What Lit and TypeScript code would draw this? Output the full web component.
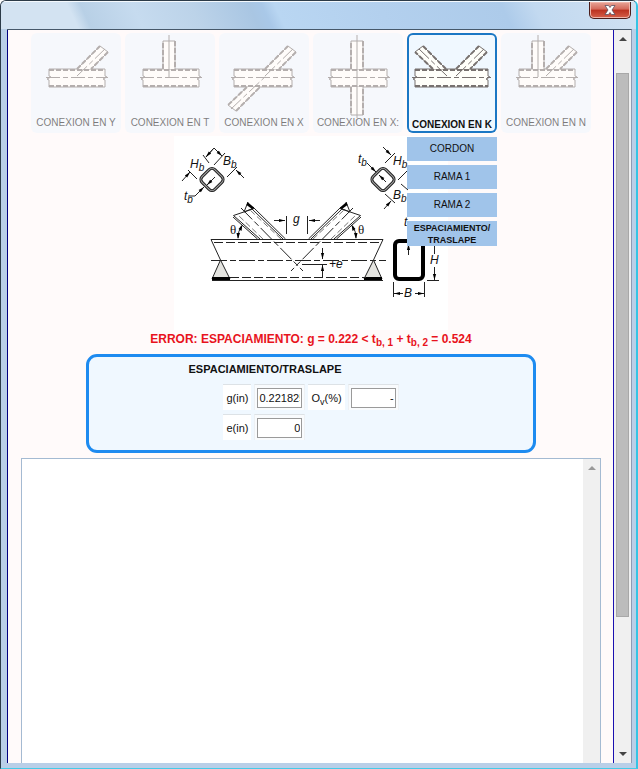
import { LitElement, html, css, svg } from "lit";
import { customElement, state } from "lit/decorators.js";
import { classMap } from "lit/directives/class-map.js";

type Pt = [number, number];

const poly = (pts: Pt[]) => pts.map((p) => p.join(",")).join(" ");

/* A line that ends in a slim filled arrow head. */
const arrow = (x1: number, y1: number, x2: number, y2: number) => {
  const a = Math.atan2(y2 - y1, x2 - x1);
  const len = 6;
  const half = 1.6;
  const bx = x2 - len * Math.cos(a);
  const by = y2 - len * Math.sin(a);
  const dx = half * Math.sin(a);
  const dy = half * Math.cos(a);
  return svg`<path d="M${x1} ${y1}L${x2} ${y2}" />
    <path class="solid" d="M${x2} ${y2}L${bx + dx} ${by - dy}L${bx - dx} ${by + dy}Z" />`;
};

/* A tube: two walls, a closing end and a dashed inner line on both sides. */
const tube = (a: Pt, b: Pt, c: Pt, d: Pt) => svg`
  <polygon class="fill" points=${poly([a, b, c, d])} />
  <path class="thin" d="M${a}L${b}L${c}L${d}" />
  <path class="wall" d="M${a}L${b}M${c}L${d}" />`;

const axis = (a: Pt, b: Pt) => svg`<path class="axis" d="M${a}L${b}" />`;

const chord = (x1: number, x2: number) => svg`
  <rect class="fill" x=${x1} y="36" width=${x2 - x1} height="18" />
  <path class="thin" d="M${x1} 36H${x2}V43l2 1l-4 2l2 1V54H${x1}V47l-2 -1l4 -2l-2 -1Z" />
  <path class="wall" d="M${x1} 37H${x2}M${x1} 53H${x2}" />
  <path class="axis" d="M${x1 - 3} 44.5H${x2 + 3}" />`;

const vertical = (x: number) => svg`
  ${tube([x - 6, 36], [x - 6, 8], [x + 6, 8], [x + 6, 36])}
  <path class="thin" d="M${x} 2V44" />`;

const slant = (x: number) => svg`
  ${tube([x, 36], [x + 23, 13], [x + 31, 19], [x + 14, 36])}
  ${axis([x, 43], [x + 30, 14])}`;

interface Joint {
  label: string;
  art: unknown;
}

const joints: Joint[] = [
  { label: "CONEXION EN Y", art: svg`${chord(18, 74)}${slant(46)}` },
  { label: "CONEXION EN T", art: svg`${chord(18, 74)}${vertical(44)}` },
  {
    label: "CONEXION EN X",
    art: svg`${chord(15, 73)}${slant(46)}
      ${tube([28, 54], [9, 72], [17, 78], [41, 54])}${axis([12, 76], [48, 42])}`,
  },
  {
    label: "CONEXION EN X:",
    art: svg`${chord(18, 74)}${vertical(44)}
      ${tube([38, 54], [38, 82], [50, 82], [50, 54])}
      <path class="thin" d="M44 44V85" />`,
  },
  {
    label: "CONEXION EN K",
    art: svg`${chord(8, 81)}${slant(49)}
      ${tube([26, 36], [8, 19], [16, 13], [39, 36])}${axis([40, 43], [11, 15])}`,
  },
  { label: "CONEXION EN N", art: svg`${chord(18, 74)}${vertical(37)}${slant(45)}` },
];

const menu = ["CORDON", "RAMA 1", "RAMA 2", "ESPACIAMIENTO/ TRASLAPE"];

/* The left half of the joint; the right half is its mirror. */
const half = svg`
  <path d="M285.5 239L253 207M283 239L251.500 208.500M260 239L233.500 215.500M257.500 239L233 217M233.500 215.500L254 208.500" />
  <path class="dash" d="M281 239L250 210M263 239L238 215" />
  <path class="dashdot" d="M241 208L303 271" />
  <path d="M244 212L248 202M244 212L254 208" />
  <path class="black" d="M247.500 202L254 207.500L252 209L246.500 205Z" />
  <path d="M211 239.500L220.500 260" />
  <path class="grey" d="M220.500 260L230 279H212Z" />
  <rect class="black" x="212" y="277" width="18" height="4" />
  <path d="M241.500 226Q238 231 238 238" />
  <path class="solid" d="M242.500 224.500L241.500 231L238.500 229ZM238 239L236.500 233L240 233Z" />`;

const box = (cx: number) => svg`
  <g transform="rotate(45 ${cx} 179.500)">
    <rect class="shell" x=${cx - 9} y="170.500" width="18" height="18" rx="4" />
    <rect class="core" x=${cx - 9} y="170.500" width="18" height="18" rx="4" />
  </g>`;

const sym = (x: number, y: number, main: string, sub = "") => svg`
  <text x=${x} y=${y}>${main}<tspan class="sub" dy="3">${sub}</tspan></text>`;

const diagram = svg`
  <g>${half}</g>
  <g transform="translate(594 0) scale(-1 1)">${half}</g>
  <path d="M211 239.500H383M212 280.500H383" />
  <path class="long" d="M214 242.500H380M230 277.500H366" />
  <path class="dashdot" d="M211 260.500H386" />
  <path d="M286.500 216V234M307.500 216V234M302 264.500H327" />
  ${arrow(274, 220.5, 285, 220.5)}${arrow(320, 220.5, 309, 220.5)}
  ${arrow(322.5, 248, 322.5, 259)}${arrow(322.5, 277, 322.5, 265)}
  ${sym(293, 223, "g")}${sym(329, 268, "+e")}
  <text class="theta" x="230" y="234">θ</text>
  <text class="theta" x="358" y="234">θ</text>

  ${box(212)}
  <path d="M203 155L209 163M225 153L214 165M188 170L197 179M227 177L237 167M206 157L214 148L222 156M190 196H195" />
  ${arrow(213, 149, 206, 157)}${arrow(214, 148, 222, 156)}
  ${arrow(182, 181, 190, 172)}${arrow(244, 178, 236, 170)}
  ${arrow(195, 196, 204, 187)}${arrow(215, 177, 207, 185)}
  ${sym(190, 168, "H", "b")}${sym(223, 165, "B", "b")}${sym(184, 200, "t", "b")}

  ${box(383)}
  <path d="M395 153L385 163M398 180L408 170M401 184L408 190M385 194L395 203" />
  ${arrow(383, 147, 391, 155)}${arrow(384, 209, 391, 201)}
  ${arrow(367, 163, 376, 172)}${arrow(386, 182, 379, 175)}
  ${sym(358, 163, "t", "b")}${sym(393, 165, "H", "b")}${sym(393, 199, "B", "b")}

  <rect class="profile" x="395" y="241" width="28" height="38" rx="4" />
  ${arrow(408.5, 255, 408.5, 244)}${sym(404, 226, "t")}
  <path d="M434.500 246V254M427 280.500H439M393.500 282V297M424.500 282V297" />
  ${arrow(434.5, 267, 434.5, 280)}${arrow(403, 293.5, 394, 293.5)}${arrow(415, 293.5, 424, 293.5)}
  ${sym(430, 264, "H")}${sym(404, 297, "B")}`;

@customElement("app-root")
export class AppRoot extends LitElement {
  @state() private active = 4;

  static styles = css`
    :host {
      display: block;
      font: 11px/14px "Liberation Sans", Arial, sans-serif;
      color: #111;
    }
    * { box-sizing: border-box; }
    button { font: inherit; color: inherit; padding: 0; margin: 0; cursor: pointer; }
    .window {
      height: 100vh;
      display: flex;
      flex-direction: column;
      border: 1px solid #2c3b48;
      border-right: 2px solid #35c4e4;
      border-bottom: 1px solid #45cbe8;
      border-radius: 6px 6px 0 0;
      background: #b9cfe8;
      overflow: hidden;
    }
    .title {
      flex: none;
      height: 28px;
      display: flex;
      justify-content: flex-end;
      padding-right: 5px;
      border-top: 1px solid #f4f9fd;
      background: linear-gradient(65deg, #d3e3f2 0 12%, #b8d0e6 14%, #c6dbef 22%, #bcd3e9 31%, #a9c6e3 40%, #a9c8e8 42%, #b9d6f2 44%, #b3d0ee 60%, #adcbea 79%, #c2d9f0 84%, #d0e1f2);
    }
    .close {
      width: 42px;
      height: 17px;
      border: 1px solid #4b1d1b;
      border-top: 0;
      border-radius: 0 0 5px 5px;
      background: linear-gradient(#e8a598, #d4695a 45%, #bb3120 50%, #d5604a);
      box-shadow: inset 0 0 0 1px #efb5aa;
      display: flex;
      align-items: center;
      justify-content: center;
    }
    .frame {
      flex: 1;
      min-height: 0;
      display: flex;
      margin: 0 4px 5px 6px;
      border-top: 1px solid #46586a;
      border-right: 1px solid #8d9bb5;
      background: #f0f0f0;
    }
    .page {
      flex: 1;
      min-width: 0;
      display: flex;
      flex-direction: column;
      align-items: center;
      padding: 3px 12px 0 13px;
      border-left: 1px solid #000080;
      border-right: 1px solid #1a10b0;
      background: #fffafa;
      overflow: hidden;
    }
    .tabs { flex: none; display: flex; gap: 4px; }
    .slot { position: relative; width: 90px; }
    .tab {
      display: flex;
      flex-direction: column;
      justify-content: flex-end;
      align-items: center;
      width: 90px;
      height: 100px;
      padding-bottom: 3px;
      border: 0;
      border-radius: 6px;
      background: #f0f8ff;
      font-size: 10px;
      line-height: 14px;
      white-space: nowrap;
      position: relative;
      opacity: 0.55;
    }
    .tab.on {
      opacity: 1;
      padding-bottom: 1px;
      font-weight: bold;
      box-shadow: inset 0 0 0 2px #1b77c4;
    }
    .tab svg { position: absolute; left: 0; top: 0; }
    .tab span { position: relative; }
    .fill { fill: #fffffa; }
    .thin { fill: none; stroke: #77716f; stroke-width: 1; }
    .wall { fill: none; stroke: #77716f; stroke-width: 2; stroke-dasharray: 5 2; }
    .axis { fill: none; stroke: #77716f; stroke-width: 1; stroke-dasharray: 14 3 5 3; }
    .menu {
      position: absolute;
      top: 104px;
      left: 0;
      z-index: 1;
      width: 90px;
      display: flex;
      flex-direction: column;
      gap: 4px;
    }
    .menu button {
      height: 24px;
      border: 0;
      background: #a0c4ea;
      font-size: 10px;
      line-height: 12px;
    }
    .menu button.chosen { height: 25px; font-size: 9px; font-weight: bold; }
    .art { flex: none; width: 274px; height: 194px; margin-top: 3px; background: #fff; }
    .art path { fill: none; stroke: #222; stroke-width: 1; }
    .art .solid, .art .black { fill: #000; stroke: none; }
    .art .grey { fill: #e4e4e0; }
    .art .dash { stroke-dasharray: 6 3; stroke: #777; }
    .art .long { stroke-dasharray: 9 3; }
    .art .dashdot { stroke-dasharray: 16 3 6 3; }
    .art .shell { fill: #fff; stroke: #222; stroke-width: 3; }
    .art .core { fill: none; stroke: #aaa; stroke-width: 1; }
    .art .profile { fill: none; stroke: #000; stroke-width: 4; }
    .art text { font: italic 12px "Liberation Sans", Arial, sans-serif; fill: #111; }
    .art .sub { font-size: 10px; }
    .art .theta { font: 13px "Liberation Serif", serif; }
    .error {
      flex: none;
      margin: 0;
      padding-top: 1px;
      height: 24px;
      font-size: 12px;
      line-height: 16px;
      font-weight: bold;
      color: #e8121c;
      white-space: nowrap;
    }
    .error sub { font-size: 10px; line-height: 0; }
    .panel {
      flex: none;
      width: 450px;
      max-width: 100%;
      height: 99px;
      margin: 0;
      padding: 4px 0 0;
      border: 3px solid #1e8bf0;
      border-radius: 11px;
      background: #f0f8ff;
    }
    h2 {
      margin: 0;
      padding-right: 92px;
      font-size: 11px;
      line-height: 16px;
      text-align: center;
    }
    .fields { margin: 3px auto 0; border-spacing: 3px 4px; }
    .fields th, .fields td {
      height: 26px;
      padding: 0 3px;
      border-top: 1px solid #dde2e6;
      background: #fff;
      font-weight: normal;
      white-space: nowrap;
    }
    .fields td { border-left: 1px solid #eef1f4; border-right: 1px solid #eef1f4; background: #f9fbfd; padding: 0 2px; }
    .fields sub { font-size: 9px; line-height: 0; }
    .fields input {
      display: block;
      width: 45px;
      height: 20px;
      padding: 0 1px;
      border: 1px solid #9a9a9a;
      border-radius: 0;
      background: #fff;
      font: 11px "Liberation Sans", Arial, sans-serif;
      color: #111;
      text-align: right;
    }
    .fields .from-start { text-align: left; }
    .results {
      flex: 1;
      align-self: stretch;
      min-height: 0;
      display: flex;
      margin-top: 5px;
      border: 1px solid #a4bad2;
      border-bottom: 0;
      background: #f0f0f0;
    }
    .results textarea {
      flex: 1;
      min-width: 0;
      padding: 4px;
      border: 0;
      outline: 0;
      resize: none;
      background: #fff;
      overflow: hidden;
      font: inherit;
    }
    .bar {
      flex: none;
      width: 17px;
      display: flex;
      flex-direction: column;
      align-items: center;
      background: #f0f0f0;
    }
    .bar button {
      flex: none;
      width: 17px;
      height: 18px;
      border: 0;
      background: none;
      display: flex;
      align-items: center;
      justify-content: center;
    }
    .track { flex: 1; width: 13px; padding: 25px 0 128px; }
    .thumb { height: 100%; border: 1px solid #a8a8a8; background: #bcbcbc; }
  `;

  render() {
    return html`
      <div class="window">
        <header class="title">
          <button class="close" aria-label="Cerrar">
            <svg width="12" height="10" viewBox="0 0 12 10">
              <path d="M1 .5H4.500L6 2.500L7.500 .5H11L8 5L11 9.500H7.500L6 7.500L4.500 9.500H1L4 5Z" fill="#fff" stroke="#5b5060" stroke-width=".8" />
            </svg>
          </button>
        </header>
        <div class="frame">
          <main class="page">
            <nav class="tabs">
              ${joints.map(
                (j, i) => html`
                  <div class="slot">
                    <button class=${classMap({ tab: true, on: i === this.active })} @click=${() => (this.active = i)}>
                      <svg width="90" height="88" viewBox="0 0 90 88" aria-hidden="true">${j.art}</svg>
                      <span>${j.label}</span>
                    </button>
                    ${i === this.active
                      ? html`<div class="menu">
                          ${menu.map((m, k) => html`<button class=${classMap({ chosen: k === 3 })}>${m}</button>`)}
                        </div>`
                      : null}
                  </div>
                `
              )}
            </nav>
            <svg class="art" viewBox="174 136 274 194">${diagram}</svg>
            <p class="error">
              ERROR: ESPACIAMIENTO: g = 0.222 &lt; t<sub>b, 1</sub> + t<sub>b, 2</sub> = 0.524
            </p>
            <section class="panel">
              <h2>ESPACIAMIENTO/TRASLAPE</h2>
              <table class="fields">
                <tr>
                  <th><label for="g">g(in)</label></th>
                  <td><input id="g" class="from-start" .value=${"0.2218254"} /></td>
                  <th><label for="ov">O<sub>v</sub>(%)</label></th>
                  <td><input id="ov" .value=${"-"} /></td>
                </tr>
                <tr>
                  <th><label for="e">e(in)</label></th>
                  <td><input id="e" .value=${"0"} /></td>
                </tr>
              </table>
            </section>
            <div class="results">
              <textarea aria-label="Resultados" readonly></textarea>
              <div class="bar">
                <button aria-label="Subir resultados">
                  <svg width="8" height="4" viewBox="0 0 8 4"><path d="M0 4L4 0L8 4Z" fill="#999" /></svg>
                </button>
              </div>
            </div>
          </main>
          <div class="bar">
            <button aria-label="Subir">
              <svg width="8" height="4" viewBox="0 0 8 4"><path d="M0 4L4 0L8 4Z" fill="#444" /></svg>
            </button>
            <div class="track"><div class="thumb"></div></div>
            <button aria-label="Bajar">
              <svg width="8" height="4" viewBox="0 0 8 4"><path d="M0 0H8L4 4Z" fill="#444" /></svg>
            </button>
          </div>
        </div>
      </div>
    `;
  }
}
